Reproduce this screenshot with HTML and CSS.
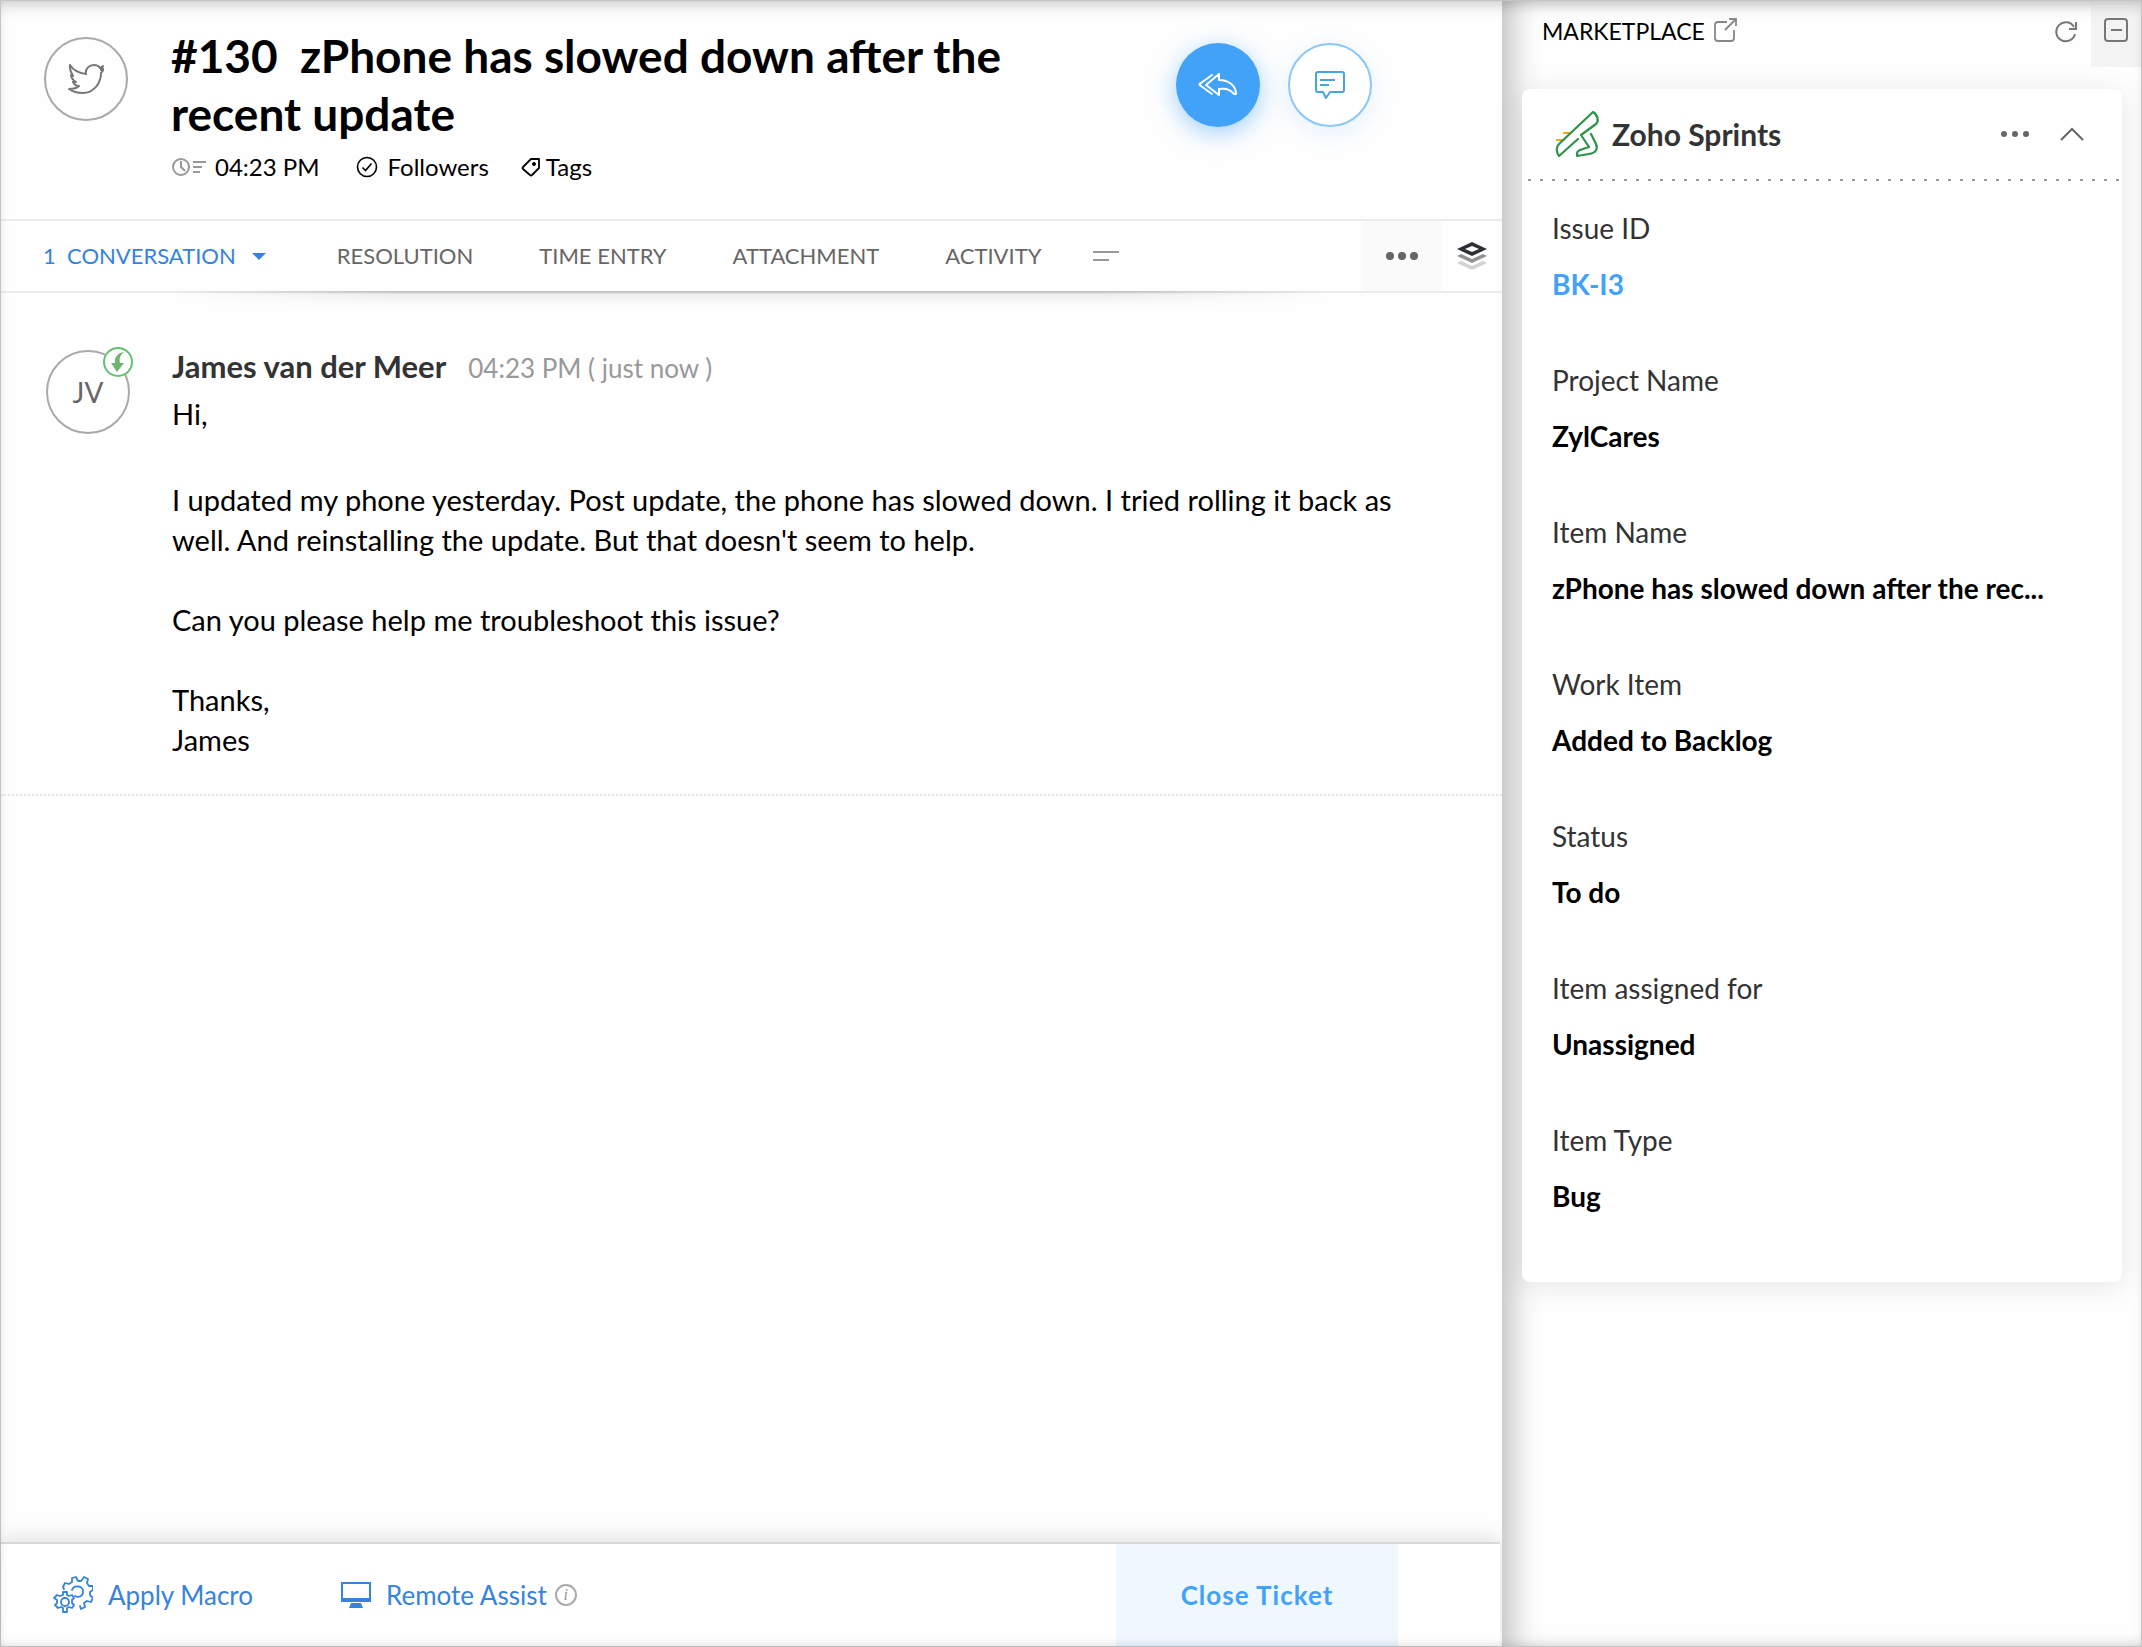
FILE: index.html
```
<!DOCTYPE html>
<html lang="en">
<head>
    <meta charset="UTF-8">
    <meta name="viewport" content="width=device-width, initial-scale=1.0">
    <title>#130 zPhone has slowed down after the recent update</title>
    <link rel="stylesheet" href="styles.css">
</head>
<body>
    <div class="app">
        <main class="ticket">
            <header class="ticket-header">
                <div class="channel">
                    <svg width="36" height="30" viewBox="0 0 36 30" fill="none" stroke="#777" stroke-width="2" stroke-linejoin="round" stroke-linecap="round">
                        <path d="M2 1c3 5 9 8 16 9-1-5 3-9 8-9 3 0 5 1 6 3l3-2-2 4 3-1-3 4c0 11-8 20-18 20-5 0-10-1-14-4 4 0 8-1 10-3-3 0-5-2-6-4h3c-3-2-5-4-5-7l2 1C3 8 1 5 2 1z"/>
                    </svg>
                </div>
                <div class="summary">
                    <h1>#130&nbsp; zPhone has slowed down after the recent update</h1>
                    <div class="meta">
                        <span class="meta-time">
                            <svg width="36" height="20" viewBox="0 0 36 20" fill="none" stroke="#999" stroke-width="2">
                                <circle cx="10" cy="10" r="8"/><path d="M10 4v6l4 4M22 5h13M22 10h9M22 15h7"/>
                            </svg>
                            04:23 PM
                        </span>
                        <button class="meta-link followers">
                            <svg width="22" height="22" viewBox="0 0 22 22" fill="none" stroke="#000" stroke-width="1.6">
                                <circle cx="11" cy="11" r="9.5"/><path d="M6.500 11.500l3 3 6-7"/>
                            </svg>
                            Followers
                        </button>
                        <button class="meta-link tags">
                            <svg width="20" height="20" viewBox="0 0 20 20" fill="none" stroke="#000" stroke-width="1.8" stroke-linejoin="round">
                                <path d="M10 2h8v9l-7 7a1.500 1.500 0 0 1-2 0l-7-6a1.500 1.500 0 0 1 0-2z"/><circle cx="13" cy="7" r="1.500" fill="#000" stroke-width="1"/>
                            </svg>
                            Tags
                        </button>
                    </div>
                </div>
                <div class="actions">
                    <button class="round reply" aria-label="Reply all">
                        <svg width="40" height="24" viewBox="0 0 40 24" fill="none" stroke="#fff" stroke-width="2" stroke-linejoin="round" stroke-linecap="round">
                            <path d="M14 2L3 10c-2 1-2 2 0 3l11 8"/>
                            <path d="M21 1v6c10 0 17 6 17 14h-2c-3-4-8-6-15-5v6L8 12z"/>
                        </svg>
                    </button>
                    <button class="round comment" aria-label="Comment">
                        <svg width="32" height="30" viewBox="0 0 32 30" fill="none" stroke="#48a4dd" stroke-width="2" stroke-linejoin="round">
                            <path d="M4 2h24a2 2 0 0 1 2 2v16a2 2 0 0 1-2 2H16l-4 6-3-6H4a2 2 0 0 1-2-2V4a2 2 0 0 1 2-2z"/>
                            <path d="M6 10h15M6 15h9"/>
                        </svg>
                    </button>
                </div>
            </header>

            <nav class="tabs">
                <a href="#" class="tab active">1&nbsp; CONVERSATION <span class="caret"></span></a>
                <a href="#" class="tab">RESOLUTION</a>
                <a href="#" class="tab">TIME ENTRY</a>
                <a href="#" class="tab">ATTACHMENT</a>
                <a href="#" class="tab">ACTIVITY</a>
                <button class="more-tabs" aria-label="More tabs">
                    <svg width="26" height="14" viewBox="0 0 26 14" stroke="#999" stroke-width="2"><path d="M0 3h26M0 11h16"/></svg>
                </button>
                <button class="options" aria-label="More options">
                    <svg width="34" height="8" viewBox="0 0 34 8" fill="#666"><circle cx="5" cy="4" r="4"/><circle cx="17" cy="4" r="4"/><circle cx="29" cy="4" r="4"/></svg>
                </button>
                <button class="layers" aria-label="Layers">
                    <svg width="30" height="28" viewBox="0 0 30 28">
                        <path fill="#d3d3d3" d="M0 21l4-2 11 5 11-5 4 2-15 7z"/>
                        <path fill="#909295" d="M0 14l4-2 11 5 11-5 4 2-15 7z"/>
                        <path fill="#2d2f36" fill-rule="evenodd" d="M15 0l15 7-15 7L0 7zM15 4L8 7l7 3 7-3z"/>
                    </svg>
                </button>
            </nav>

            <article class="message">
                <div class="avatar">
                    JV
                    <span class="incoming">
                        <svg width="14" height="20" viewBox="0 0 14 20" fill="#6fb36f"><path d="M13 0C7 1 3 5 4 11H0l6 9 7-9H9C8 7 9 3 13 0z"/></svg>
                    </span>
                </div>
                <div class="message-body">
                    <div class="sender"><strong>James van der Meer</strong><time>04:23 PM ( just now )</time></div>
                    <p class="greeting">Hi,</p>
                    <p>I updated my phone yesterday. Post update, the phone has slowed down. I tried rolling it back as well. And reinstalling the update. But that doesn't seem to help.</p>
                    <p>Can you please help me troubleshoot this issue?</p>
                    <p>Thanks,<br>James</p>
                </div>
            </article>

            <footer class="ticket-footer">
                <button class="tool macro">
                    <svg width="40" height="38" viewBox="0 0 40 38" fill="none" stroke="#3583dc" stroke-width="1.8" stroke-linejoin="round" stroke-linecap="round">
                        <path d="M11 13l-1-2 2-4 4 1 3-2V2l4-1 2 4h3l3-4 4 2-1 4 2 3 4 0v4l-3 2v3l3 3-2 4-4-1-3 2 1 4-4 2-1-3"/>
                        <path d="M19 14c2-6 12-4 11 2 0 4-4 6-8 4"/>
                        <path d="M10 16h4v3l2 1 3-1 2 3-2 2v3l2 2-2 3-3-1-2 1v4h-4v-4l-2-1-3 1-3-3 2-2v-3l-3-2 3-3 3 1 3-1z"/>
                        <circle cx="12" cy="26" r="4"/>
                    </svg>
                    Apply Macro
                </button>
                <button class="tool remote">
                    <svg width="30" height="28" viewBox="0 0 30 28" fill="none" stroke="#3583dc" stroke-width="2">
                        <path d="M1 2h28v18H1zM1 18h28"/><path fill="#3583dc" stroke="none" d="M10 22h10l2 5H8z"/>
                    </svg>
                    Remote Assist
                </button>
                <span class="info">i</span>
                <button class="close-ticket">Close Ticket</button>
            </footer>
        </main>

        <aside class="marketplace">
            <div class="market-bar">
                <h2>MARKETPLACE</h2>
                <a href="#" class="external" aria-label="Open Marketplace">
                    <svg width="24" height="24" viewBox="0 0 24 24" fill="none" stroke="#888" stroke-width="1.8">
                        <path d="M13 4H4a3 3 0 0 0-3 3v13a3 3 0 0 0 3 3h13a3 3 0 0 0 3-3v-8M11 12L22 1M15 1h7v7"/>
                    </svg>
                </a>
                <button class="refresh" aria-label="Refresh">
                    <svg width="24" height="22" viewBox="0 0 24 22" fill="none" stroke="#777" stroke-width="2"><path d="M21 13a9.500 9.500 0 1 1-1-7M22 1v7h-7"/></svg>
                </button>
                <button class="collapse" aria-label="Collapse panel">
                    <svg width="24" height="24" viewBox="0 0 24 24" fill="none" stroke="#777" stroke-width="2"><rect x="1" y="1" width="22" height="22" rx="3"/><path d="M7 12h11"/></svg>
                </button>
            </div>

            <section class="card">
                <div class="card-header">
                    <svg width="46" height="48" viewBox="0 0 46 48" fill="none" stroke="#2b9348" stroke-width="2.200" stroke-linejoin="round" stroke-linecap="round">
                        <path stroke="#f3a81c" d="M10 23h7M3 30h7"/>
                        <path d="M24 29L5 46c-3-4-3-9 0-12L39 2c5 3 6 9 3 12L27 25l8 12-9 3c-3 1-3 3-3 6l12-2c7-1 9-5 7-10l-5-10"/>
                    </svg>
                    <h3>Zoho Sprints</h3>
                    <button class="card-more" aria-label="Card options">
                        <svg width="30" height="8" viewBox="0 0 30 8" fill="#666"><circle cx="4" cy="4" r="3"/><circle cx="15" cy="4" r="3"/><circle cx="26" cy="4" r="3"/></svg>
                    </button>
                    <button class="card-toggle" aria-label="Collapse card">
                        <svg width="24" height="14" viewBox="0 0 24 14" fill="none" stroke="#666" stroke-width="2"><path d="M1 13L12 2l11 11"/></svg>
                    </button>
                </div>
                <dl class="fields">
                    <dt>Issue ID</dt>
                    <dd><a href="#">BK-I3</a></dd>
                    <dt>Project Name</dt>
                    <dd>ZylCares</dd>
                    <dt>Item Name</dt>
                    <dd>zPhone has slowed down after the rec...</dd>
                    <dt>Work Item</dt>
                    <dd>Added to Backlog</dd>
                    <dt>Status</dt>
                    <dd>To do</dd>
                    <dt>Item assigned for</dt>
                    <dd>Unassigned</dd>
                    <dt>Item Type</dt>
                    <dd>Bug</dd>
                </dl>
            </section>
        </aside>
    </div>
</body>
</html>
```

FILE: styles.css
```
* {
    box-sizing: border-box;
}
body {
    margin: 0;
    font-family: Lato, "Liberation Sans", sans-serif;
    font-size: 28px;
    line-height: 40px;
    color: #000;
    background: #fefefe;
}
h1, h2, h3, p, dl, dd {
    margin: 0;
}
button {
    font: inherit;
    color: inherit;
    padding: 0;
    border: none;
    background: none;
    cursor: pointer;
}
a {
    color: inherit;
    text-decoration: none;
}
svg {
    display: block;
    flex: none;
}
.app {
    position: relative;
    display: grid;
    grid-template-columns: minmax(0, 1fr) 639px;
    min-height: 100vh;
    border: 1px solid #c4c4c4;
}
/* soft edge all around the window */
.app::after {
    content: "";
    position: absolute;
    inset: 0;
    box-shadow: inset 0 10px 16px -8px rgba(0, 0, 0, 0.25), inset 0 -8px 12px -8px rgba(0, 0, 0, 0.15);
    pointer-events: none;
}
.ticket {
    display: flex;
    flex-direction: column;
}

/* header */
.ticket-header {
    display: flex;
    align-items: flex-start;
    height: 220px;
    padding: 26px 130px 0 43px;
    border-bottom: 2px solid #ececec;
}
.channel, .avatar {
    display: flex;
    align-items: center;
    justify-content: center;
    flex: none;
    width: 84px;
    height: 84px;
    border: 2px solid #aaa;
    border-radius: 50%;
}
.channel {
    margin-top: 10px;
}
.summary {
    flex: 1;
    max-width: 940px;
    padding: 0 40px 0 43px;
}
h1 {
    font-size: 46px;
    line-height: 58px;
    font-weight: 700;
}
.meta {
    display: flex;
    align-items: center;
    margin-top: 4px;
    font-size: 24px;
}
.meta-time, .meta-link {
    display: flex;
    align-items: center;
}
.meta-time {
    gap: 8px;
}
.followers {
    gap: 10px;
    margin-left: 36px;
}
.tags {
    gap: 5px;
    margin-left: 32px;
}
.actions {
    display: flex;
    gap: 28px;
    margin: 16px 0 0 auto;
}
.round {
    display: flex;
    align-items: center;
    justify-content: center;
    width: 84px;
    height: 84px;
    border-radius: 50%;
}
.reply {
    background: #41a2f8;
    box-shadow: 0 6px 24px rgba(65, 162, 248, 0.5);
}
.comment {
    border: 2px solid #8cc7fa;
    background: #fff;
    box-shadow: 0 6px 24px rgba(65, 162, 248, 0.15);
}

/* tabs */
.tabs {
    position: relative;
    display: flex;
    align-items: center;
    gap: 66px;
    height: 72px;
    padding-left: 42px;
    border-bottom: 2px solid #ececec;
    font-size: 22px;
    color: #666;
}
.tabs::after {
    content: "";
    position: absolute;
    top: 70px;
    left: 11%;
    right: 11%;
    height: 16px;
    background: linear-gradient(rgba(0, 0, 0, 0.2), rgba(0, 0, 0, 0.06) 4px, transparent);
    mask-image: linear-gradient(90deg, transparent, #000 20%, #000 80%, transparent);
}
.tab {
    white-space: nowrap;
}
.tab.active {
    display: flex;
    align-items: center;
    margin-right: 5px;
    color: #3583dc;
}
.caret {
    margin-left: 16px;
    border: 7px solid transparent;
    border-top-color: #3583dc;
    border-bottom: none;
}
.more-tabs {
    margin-left: -14px;
}
.options {
    display: flex;
    align-items: center;
    justify-content: center;
    align-self: stretch;
    width: 80px;
    margin: 0 -66px 0 auto;
    background: #fafafa;
}
.layers {
    padding: 0 15px;
}

/* conversation */
.message {
    display: flex;
    padding: 53px 100px 34px 45px;
    border-bottom: 2px dotted #e6e6e6;
}
.avatar {
    position: relative;
    margin-top: 4px;
    color: #666;
}
.incoming {
    position: absolute;
    top: -5px;
    right: -5px;
    display: flex;
    align-items: center;
    justify-content: center;
    width: 30px;
    height: 30px;
    border: 2px solid #62c073;
    border-radius: 50%;
    background: #fff;
}
.message-body {
    flex: 1;
    padding-left: 42px;
}
.message-body p {
    margin-bottom: 40px;
    font-size: 29px;
}
.message-body p.greeting {
    margin-bottom: 46px;
}
.message-body p:last-child {
    margin-bottom: 0;
}
.sender {
    display: flex;
    align-items: baseline;
    gap: 22px;
    margin-bottom: 6px;
}
.sender strong {
    font-size: 31px;
    color: #333;
}
.sender time {
    font-size: 26px;
    color: #999;
}

/* footer */
.ticket-footer {
    display: flex;
    align-items: center;
    height: 104px;
    margin: auto 2px 0 0;
    padding: 0 102px 0 52px;
    border-top: 2px solid #d8d8d8;
    box-shadow: 0 -4px 20px rgba(0, 0, 0, 0.12);
    background: #fff;
    font-size: 26px;
    color: #3583dc;
}
.tool {
    display: flex;
    align-items: center;
    gap: 15px;
}
.remote {
    margin-left: 88px;
}
.info {
    width: 22px;
    height: 22px;
    margin-left: 8px;
    border: 2px solid #aaa;
    border-radius: 50%;
    font: italic 16px/18px "Liberation Serif", serif;
    text-align: center;
    color: #999;
}
.close-ticket {
    align-self: stretch;
    width: 282px;
    margin-left: auto;
    background: #eff8ff;
    color: #41a2f8;
    font-size: 26px;
    font-weight: 700;
    letter-spacing: 1px;
}

/* marketplace panel */
.marketplace {
    background: #fefefe;
    box-shadow: inset 24px 0 30px -14px rgba(0, 0, 0, 0.25);
    padding-left: 20px;
}
.market-bar {
    display: flex;
    align-items: flex-start;
    height: 88px;
    padding-left: 20px;
}
h2 {
    margin-top: 10px;
    font-size: 23px;
    font-weight: 400;
}
.external {
    margin: 17px 0 0 9px;
}
.refresh {
    margin: 20px 13px 0 auto;
}
.collapse {
    width: 50px;
    height: 66px;
    padding: 0 13px 8px;
    background: #f3f3f3;
}
.card {
    margin-right: 19px;
    padding-bottom: 66px;
    border-radius: 8px;
    background: #fff;
    box-shadow: 0 4px 30px rgba(0, 0, 0, 0.1);
}
.card-header {
    display: flex;
    align-items: center;
    height: 92px;
    padding: 0 38px 2px 32px;
    background: repeating-linear-gradient(90deg, #999 0 3px, transparent 3px 12px) 6px 100% / 100% 2px no-repeat;
}
h3 {
    margin-left: 12px;
    font-size: 30px;
    color: #333;
}
.card-more {
    margin-left: auto;
}
.card-toggle {
    margin-left: 30px;
}
.fields {
    padding: 27px 30px 0;
}
.fields dt {
    margin-bottom: 16px;
    color: #333;
}
.fields dd {
    font-weight: 700;
    white-space: nowrap;
    overflow: hidden;
    text-overflow: ellipsis;
}
.fields dd + dt {
    margin-top: 56px;
}
.fields a {
    color: #41a2f8;
}
```
